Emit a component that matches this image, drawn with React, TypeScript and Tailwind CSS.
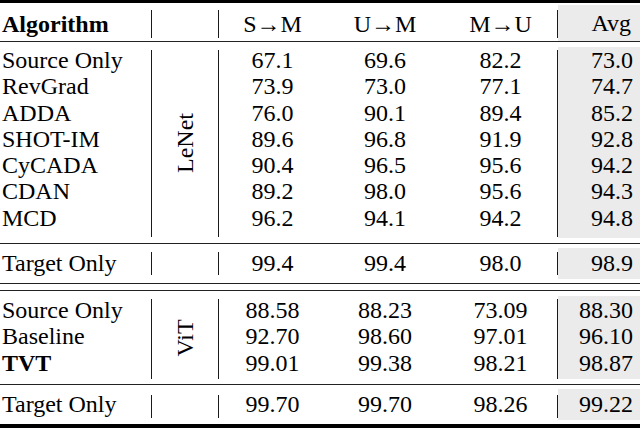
type Row = { name: string; bold?: boolean; vals: string[]; avg: string };

const lenet: Row[] = [
  { name: "Source Only", vals: ["67.1", "69.6", "82.2"], avg: "73.0" },
  { name: "RevGrad", vals: ["73.9", "73.0", "77.1"], avg: "74.7" },
  { name: "ADDA", vals: ["76.0", "90.1", "89.4"], avg: "85.2" },
  { name: "SHOT-IM", vals: ["89.6", "96.8", "91.9"], avg: "92.8" },
  { name: "CyCADA", vals: ["90.4", "96.5", "95.6"], avg: "94.2" },
  { name: "CDAN", vals: ["89.2", "98.0", "95.6"], avg: "94.3" },
  { name: "MCD", vals: ["96.2", "94.1", "94.2"], avg: "94.8" },
];

const vit: Row[] = [
  { name: "Source Only", vals: ["88.58", "88.23", "73.09"], avg: "88.30" },
  { name: "Baseline", vals: ["92.70", "98.60", "97.01"], avg: "96.10" },
  { name: "TVT", bold: true, vals: ["99.01", "99.38", "98.21"], avg: "98.87" },
];

const GRID =
  "grid grid-cols-[151px_1px_66px_1px_107px_118px_113px_1px_82px]";

function Bar({ cls }: { cls: string }) {
  return <div className={`w-px bg-[#1a1a1a] ${cls}`} />;
}

function Section({
  rows,
  label,
  height,
  pad,
  avgPad,
  barCls,
  grayCls,
}: {
  rows: Row[];
  label?: string;
  height: string;
  pad: string;
  avgPad: string;
  barCls: string;
  grayCls: string;
}) {
  return (
    <div className={`${GRID} ${height}`}>
      <div className={`flex flex-col pl-[2px] ${pad}`}>
        {rows.map((r) => (
          <div
            key={r.name}
            className={`h-[26.3px] leading-[26.3px] whitespace-nowrap ${r.bold ? "font-bold" : ""}`}
          >
            {r.name}
          </div>
        ))}
      </div>
      <Bar cls={barCls} />
      <div className="flex items-center justify-center">
        {label && (
          <div className="-rotate-90 whitespace-nowrap leading-none">{label}</div>
        )}
      </div>
      <Bar cls={barCls} />
      {[0, 1, 2].map((i) => (
        <div key={i} className={`flex flex-col items-center ${pad}`}>
          {rows.map((r) => (
            <div key={r.name} className="h-[26.3px] leading-[26.3px]">
              {r.vals[i]}
            </div>
          ))}
        </div>
      ))}
      <Bar cls={barCls} />
      <div className={`flex flex-col items-end bg-[#ebebeb] pr-[7px] ${grayCls} ${avgPad}`}>
        {rows.map((r) => (
          <div key={r.name} className="h-[26.3px] leading-[26.3px]">
            {r.avg}
          </div>
        ))}
      </div>
    </div>
  );
}

export default function App() {
  return (
    <div className="h-[428px] w-[640px] overflow-hidden bg-white font-['Liberation_Serif',serif] text-[24px] text-black">
      <div className="h-[3px] bg-black" />

      {/* header */}
      <div className={`${GRID} h-[38px]`}>
        <div className="flex items-center pl-[2px] font-bold">Algorithm</div>
        <Bar cls="mt-[7px] mb-[6px]" />
        <div />
        <Bar cls="mt-[7px] mb-[6px]" />
        <div className="flex items-center justify-center whitespace-nowrap">S→M</div>
        <div className="flex items-center justify-center whitespace-nowrap">U→M</div>
        <div className="flex items-center justify-center whitespace-nowrap">M→U</div>
        <Bar cls="mt-[7px] mb-[6px]" />
        <div className="mt-[2px] mb-[3px] flex items-center justify-end bg-[#ebebeb] pr-[9px]">
          Avg
        </div>
      </div>
      <div className="h-px bg-[#222]" />

      <Section
        rows={lenet}
        label="LeNet"
        height="h-[201px]"
        pad="pt-[5px]"
        avgPad="pt-0"
        barCls="mt-[8px] mb-[6px]"
        grayCls="mt-[5px] mb-[5px]"
      />
      <div className="h-px bg-[#222]" />

      <Section
        rows={[{ name: "Target Only", vals: ["99.4", "99.4", "98.0"], avg: "98.9" }]}
        height="h-[39px]"
        pad="pt-[6px]"
        avgPad="pt-[2px]"
        barCls="mt-[8px] mb-[8px]"
        grayCls="mt-[4px] mb-[4px]"
      />
      <div className="h-px bg-[#222]" />
      <div className="h-[6px]" />
      <div className="h-px bg-[#222]" />

      <Section
        rows={vit}
        label="ViT"
        height="h-[93px]"
        pad="pt-[6px]"
        avgPad="pt-px"
        barCls="mt-[8px] mb-[5px]"
        grayCls="mt-[5px] mb-[5px]"
      />
      <div className="h-px bg-[#222]" />

      <Section
        rows={[{ name: "Target Only", vals: ["99.70", "99.70", "98.26"], avg: "99.22" }]}
        height="h-[39px]"
        pad="pt-[6px]"
        avgPad="pt-[2px]"
        barCls="mt-[10px] mb-[6px]"
        grayCls="mt-[4px] mb-[4px]"
      />
      <div className="h-[4px] bg-black" />
    </div>
  );
}
